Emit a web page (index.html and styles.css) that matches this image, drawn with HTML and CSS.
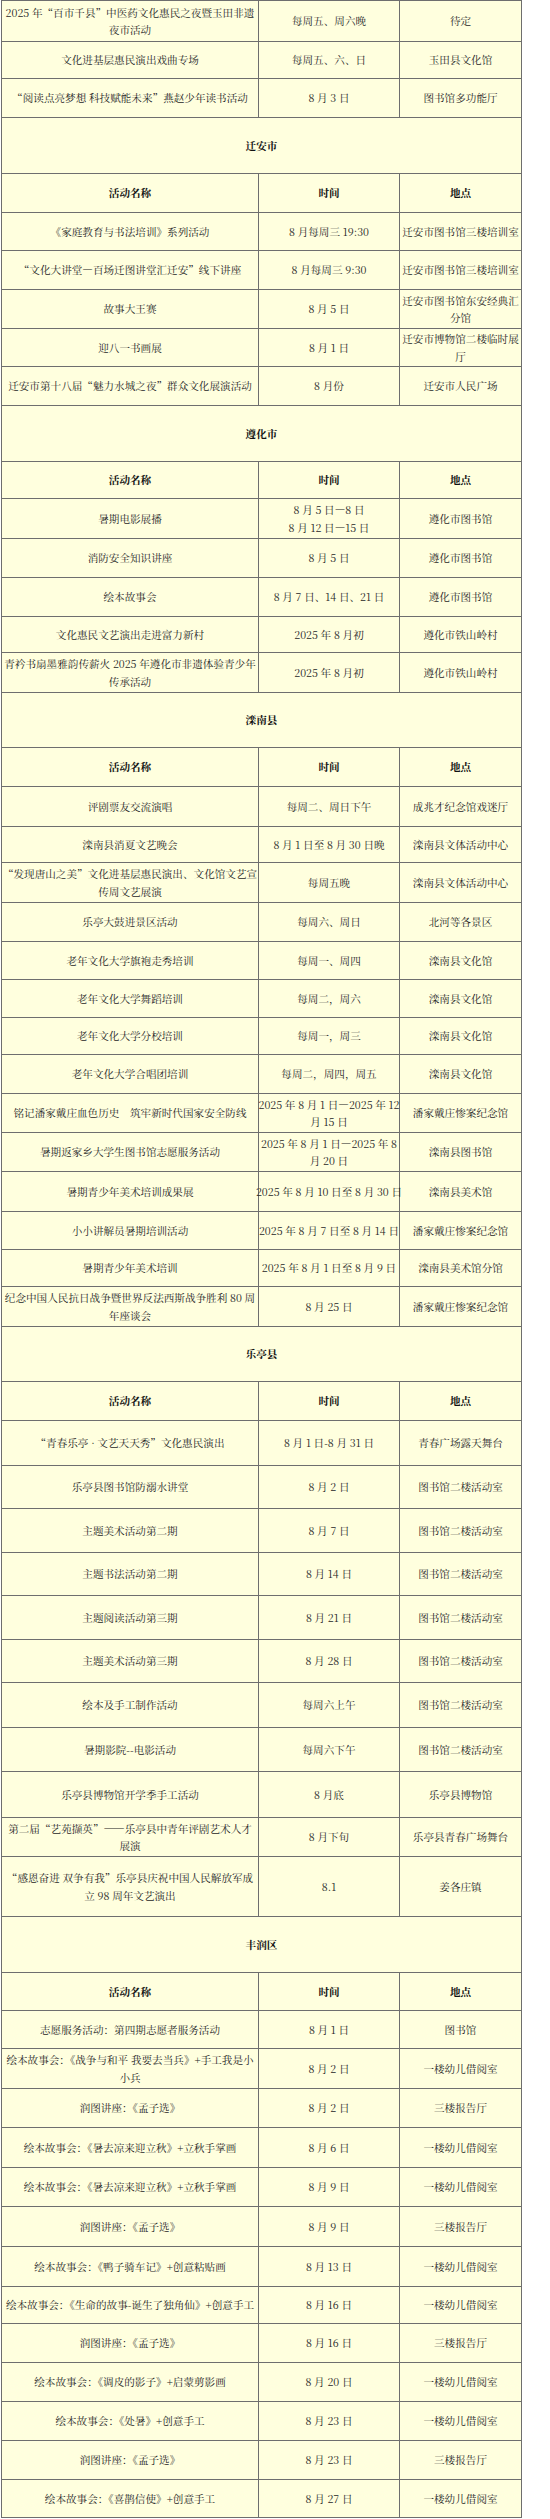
FILE: index.html
```html
<!DOCTYPE html>
<html lang="zh-CN">
<head>
<meta charset="utf-8">
<title>八月文化活动安排</title>
<link rel="stylesheet" href="styles.css">
</head>
<body>
<div class="schedule">
<div class="row h41"><div class="cell">2025 年“百市千县”中医药文化惠民之夜暨玉田非遗<br>夜市活动</div><div class="cell">每周五、周六晚</div><div class="cell">待定</div></div>
<div class="row h37"><div class="cell">文化进基层惠民演出戏曲专场</div><div class="cell">每周五、六、日</div><div class="cell">玉田县文化馆</div></div>
<div class="row"><div class="cell">“阅读点亮梦想 科技赋能未来”燕赵少年读书活动</div><div class="cell">8 月 3 日</div><div class="cell">图书馆多功能厅</div></div>

<div class="row sec h56"><div class="cell">迁安市</div></div>
<div class="row head"><div class="cell">活动名称</div><div class="cell">时间</div><div class="cell">地点</div></div>
<div class="row h38"><div class="cell">《家庭教育与书法培训》系列活动</div><div class="cell">8 月每周三 19:30</div><div class="cell">迁安市图书馆三楼培训室</div></div>
<div class="row"><div class="cell">“文化大讲堂—百场迁图讲堂汇迁安”线下讲座</div><div class="cell">8 月每周三 9:30</div><div class="cell">迁安市图书馆三楼培训室</div></div>
<div class="row"><div class="cell">故事大王赛</div><div class="cell">8 月 5 日</div><div class="cell">迁安市图书馆东安经典汇<br>分馆</div></div>
<div class="row h38"><div class="cell">迎八一书画展</div><div class="cell">8 月 1 日</div><div class="cell">迁安市博物馆二楼临时展<br>厅</div></div>
<div class="row"><div class="cell">迁安市第十八届“魅力水城之夜”群众文化展演活动</div><div class="cell">8 月份</div><div class="cell">迁安市人民广场</div></div>

<div class="row sec h56"><div class="cell">遵化市</div></div>
<div class="row head h37"><div class="cell">活动名称</div><div class="cell">时间</div><div class="cell">地点</div></div>
<div class="row h40"><div class="cell">暑期电影展播</div><div class="cell">8 月 5 日—8 日<br>8 月 12 日—15 日</div><div class="cell">遵化市图书馆</div></div>
<div class="row"><div class="cell">消防安全知识讲座</div><div class="cell">8 月 5 日</div><div class="cell">遵化市图书馆</div></div>
<div class="row"><div class="cell">绘本故事会</div><div class="cell">8 月 7 日、14 日、21 日</div><div class="cell">遵化市图书馆</div></div>
<div class="row h36"><div class="cell">文化惠民文艺演出走进富力新村</div><div class="cell">2025 年 8 月初</div><div class="cell">遵化市铁山岭村</div></div>
<div class="row h40"><div class="cell">青衿书扇墨雅韵传薪火 2025 年遵化市非遗体验青少年<br>传承活动</div><div class="cell">2025 年 8 月初</div><div class="cell">遵化市铁山岭村</div></div>

<div class="row sec h55"><div class="cell">滦南县</div></div>
<div class="row head"><div class="cell">活动名称</div><div class="cell">时间</div><div class="cell">地点</div></div>
<div class="row h40"><div class="cell">评剧票友交流演唱</div><div class="cell">每周二、周日下午</div><div class="cell">成兆才纪念馆戏迷厅</div></div>
<div class="row h36"><div class="cell">滦南县消夏文艺晚会</div><div class="cell">8 月 1 日至 8 月 30 日晚</div><div class="cell">滦南县文体活动中心</div></div>
<div class="row h40"><div class="cell">“发现唐山之美”文化进基层惠民演出、文化馆文艺宣<br>传周文艺展演</div><div class="cell">每周五晚</div><div class="cell">滦南县文体活动中心</div></div>
<div class="row"><div class="cell">乐亭大鼓进景区活动</div><div class="cell">每周六、周日</div><div class="cell">北河等各景区</div></div>
<div class="row h38"><div class="cell">老年文化大学旗袍走秀培训</div><div class="cell">每周一、周四</div><div class="cell">滦南县文化馆</div></div>
<div class="row h38"><div class="cell">老年文化大学舞蹈培训</div><div class="cell">每周二，周六</div><div class="cell">滦南县文化馆</div></div>
<div class="row h37"><div class="cell">老年文化大学分校培训</div><div class="cell">每周一，周三</div><div class="cell">滦南县文化馆</div></div>
<div class="row"><div class="cell">老年文化大学合唱团培训</div><div class="cell">每周二，周四，周五</div><div class="cell">滦南县文化馆</div></div>
<div class="row"><div class="cell">铭记潘家戴庄血色历史　筑牢新时代国家安全防线</div><div class="cell">2025 年 8 月 1 日—2025 年 12<br>月 15 日</div><div class="cell">潘家戴庄惨案纪念馆</div></div>
<div class="row"><div class="cell">暑期返家乡大学生图书馆志愿服务活动</div><div class="cell">2025 年 8 月 1 日—2025 年 8<br>月 20 日</div><div class="cell">滦南县图书馆</div></div>
<div class="row h40"><div class="cell">暑期青少年美术培训成果展</div><div class="cell">2025 年 8 月 10 日至 8 月 30 日</div><div class="cell">滦南县美术馆</div></div>
<div class="row h38"><div class="cell">小小讲解员暑期培训活动</div><div class="cell">2025 年 8 月 7 日至 8 月 14 日</div><div class="cell">潘家戴庄惨案纪念馆</div></div>
<div class="row h37"><div class="cell">暑期青少年美术培训</div><div class="cell">2025 年 8 月 1 日至 8 月 9 日</div><div class="cell">滦南县美术馆分馆</div></div>
<div class="row h40"><div class="cell">纪念中国人民抗日战争暨世界反法西斯战争胜利 80 周<br>年座谈会</div><div class="cell">8 月 25 日</div><div class="cell">潘家戴庄惨案纪念馆</div></div>

<div class="row sec h55"><div class="cell">乐亭县</div></div>
<div class="row head"><div class="cell">活动名称</div><div class="cell">时间</div><div class="cell">地点</div></div>
<div class="row h45"><div class="cell">“青春乐亭 · 文艺天天秀”文化惠民演出</div><div class="cell">8 月 1 日-8 月 31 日</div><div class="cell">青春广场露天舞台</div></div>
<div class="row h43"><div class="cell">乐亭县图书馆防溺水讲堂</div><div class="cell">8 月 2 日</div><div class="cell">图书馆二楼活动室</div></div>
<div class="row h44"><div class="cell">主题美术活动第二期</div><div class="cell">8 月 7 日</div><div class="cell">图书馆二楼活动室</div></div>
<div class="row h43"><div class="cell">主题书法活动第二期</div><div class="cell">8 月 14 日</div><div class="cell">图书馆二楼活动室</div></div>
<div class="row h44"><div class="cell">主题阅读活动第三期</div><div class="cell">8 月 21 日</div><div class="cell">图书馆二楼活动室</div></div>
<div class="row h43"><div class="cell">主题美术活动第三期</div><div class="cell">8 月 28 日</div><div class="cell">图书馆二楼活动室</div></div>
<div class="row h45"><div class="cell">绘本及手工制作活动</div><div class="cell">每周六上午</div><div class="cell">图书馆二楼活动室</div></div>
<div class="row h44"><div class="cell">暑期影院--电影活动</div><div class="cell">每周六下午</div><div class="cell">图书馆二楼活动室</div></div>
<div class="row h46"><div class="cell">乐亭县博物馆开学季手工活动</div><div class="cell">8 月底</div><div class="cell">乐亭县博物馆</div></div>
<div class="row"><div class="cell">第二届“艺苑撷英”——乐亭县中青年评剧艺术人才<br>展演</div><div class="cell">8 月下旬</div><div class="cell">乐亭县青春广场舞台</div></div>
<div class="row h60"><div class="cell">“感恩奋进 双争有我”乐亭县庆祝中国人民解放军成<br>立 98 周年文艺演出</div><div class="cell">8.1</div><div class="cell">姜各庄镇</div></div>

<div class="row sec h56"><div class="cell">丰润区</div></div>
<div class="row head h38"><div class="cell">活动名称</div><div class="cell">时间</div><div class="cell">地点</div></div>
<div class="row h38"><div class="cell">志愿服务活动：第四期志愿者服务活动</div><div class="cell">8 月 1 日</div><div class="cell">图书馆</div></div>
<div class="row h40"><div class="cell">绘本故事会：《战争与和平 我要去当兵》+手工我是小<br>小兵</div><div class="cell">8 月 2 日</div><div class="cell">一楼幼儿借阅室</div></div>
<div class="row"><div class="cell">润图讲座：《孟子选》</div><div class="cell">8 月 2 日</div><div class="cell">三楼报告厅</div></div>
<div class="row h40"><div class="cell">绘本故事会：《暑去凉来迎立秋》+立秋手掌画</div><div class="cell">8 月 6 日</div><div class="cell">一楼幼儿借阅室</div></div>
<div class="row"><div class="cell">绘本故事会：《暑去凉来迎立秋》+立秋手掌画</div><div class="cell">8 月 9 日</div><div class="cell">一楼幼儿借阅室</div></div>
<div class="row h40"><div class="cell">润图讲座：《孟子选》</div><div class="cell">8 月 9 日</div><div class="cell">三楼报告厅</div></div>
<div class="row h40"><div class="cell">绘本故事会：《鸭子骑车记》+创意粘贴画</div><div class="cell">8 月 13 日</div><div class="cell">一楼幼儿借阅室</div></div>
<div class="row h37"><div class="cell">绘本故事会：《生命的故事-诞生了独角仙》+创意手工</div><div class="cell">8 月 16 日</div><div class="cell">一楼幼儿借阅室</div></div>
<div class="row"><div class="cell">润图讲座：《孟子选》</div><div class="cell">8 月 16 日</div><div class="cell">三楼报告厅</div></div>
<div class="row"><div class="cell">绘本故事会：《调皮的影子》+启蒙剪影画</div><div class="cell">8 月 20 日</div><div class="cell">一楼幼儿借阅室</div></div>
<div class="row"><div class="cell">绘本故事会：《处暑》+创意手工</div><div class="cell">8 月 23 日</div><div class="cell">一楼幼儿借阅室</div></div>
<div class="row"><div class="cell">润图讲座：《孟子选》</div><div class="cell">8 月 23 日</div><div class="cell">三楼报告厅</div></div>
<div class="row h38"><div class="cell">绘本故事会：《喜鹊信使》+创意手工</div><div class="cell">8 月 27 日</div><div class="cell">一楼幼儿借阅室</div></div>
</div>
</body>
</html>
```

FILE: styles.css
```css
html {
  background: #ffffff;
}

body {
  margin: 0;
  font-family: "Noto Serif CJK SC", "Liberation Serif", "Noto Sans CJK SC", serif;
  font-size: 10.6px;
  line-height: 17.5px;
  color: #262626;
}

.schedule {
  box-sizing: border-box;
  width: 521px;
  margin-left: 1px;
  border-top: 1px solid #6e6e6e;
  border-left: 1px solid #6e6e6e;
  background: #ffffde;
}

.row {
  display: grid;
  grid-template-columns: 257px 141px 122px;
  height: 39px;
}

.row.sec {
  grid-template-columns: 520px;
}

.cell {
  box-sizing: border-box;
  display: flex;
  align-items: center;
  justify-content: center;
  min-width: 0;
  padding: 0 1px;
  border-right: 1px solid #6e6e6e;
  border-bottom: 1px solid #6e6e6e;
  text-align: center;
  white-space: nowrap;
}

.head .cell,
.sec .cell {
  font-weight: bold;
  color: #111111;
}

.row.h36 { height: 36px; }
.row.h37 { height: 37px; }
.row.h38 { height: 38px; }
.row.h40 { height: 40px; }
.row.h41 { height: 41px; }
.row.h43 { height: 43px; }
.row.h44 { height: 44px; }
.row.h45 { height: 45px; }
.row.h46 { height: 46px; }
.row.h55 { height: 55px; }
.row.h56 { height: 56px; }
.row.h60 { height: 60px; }
```
